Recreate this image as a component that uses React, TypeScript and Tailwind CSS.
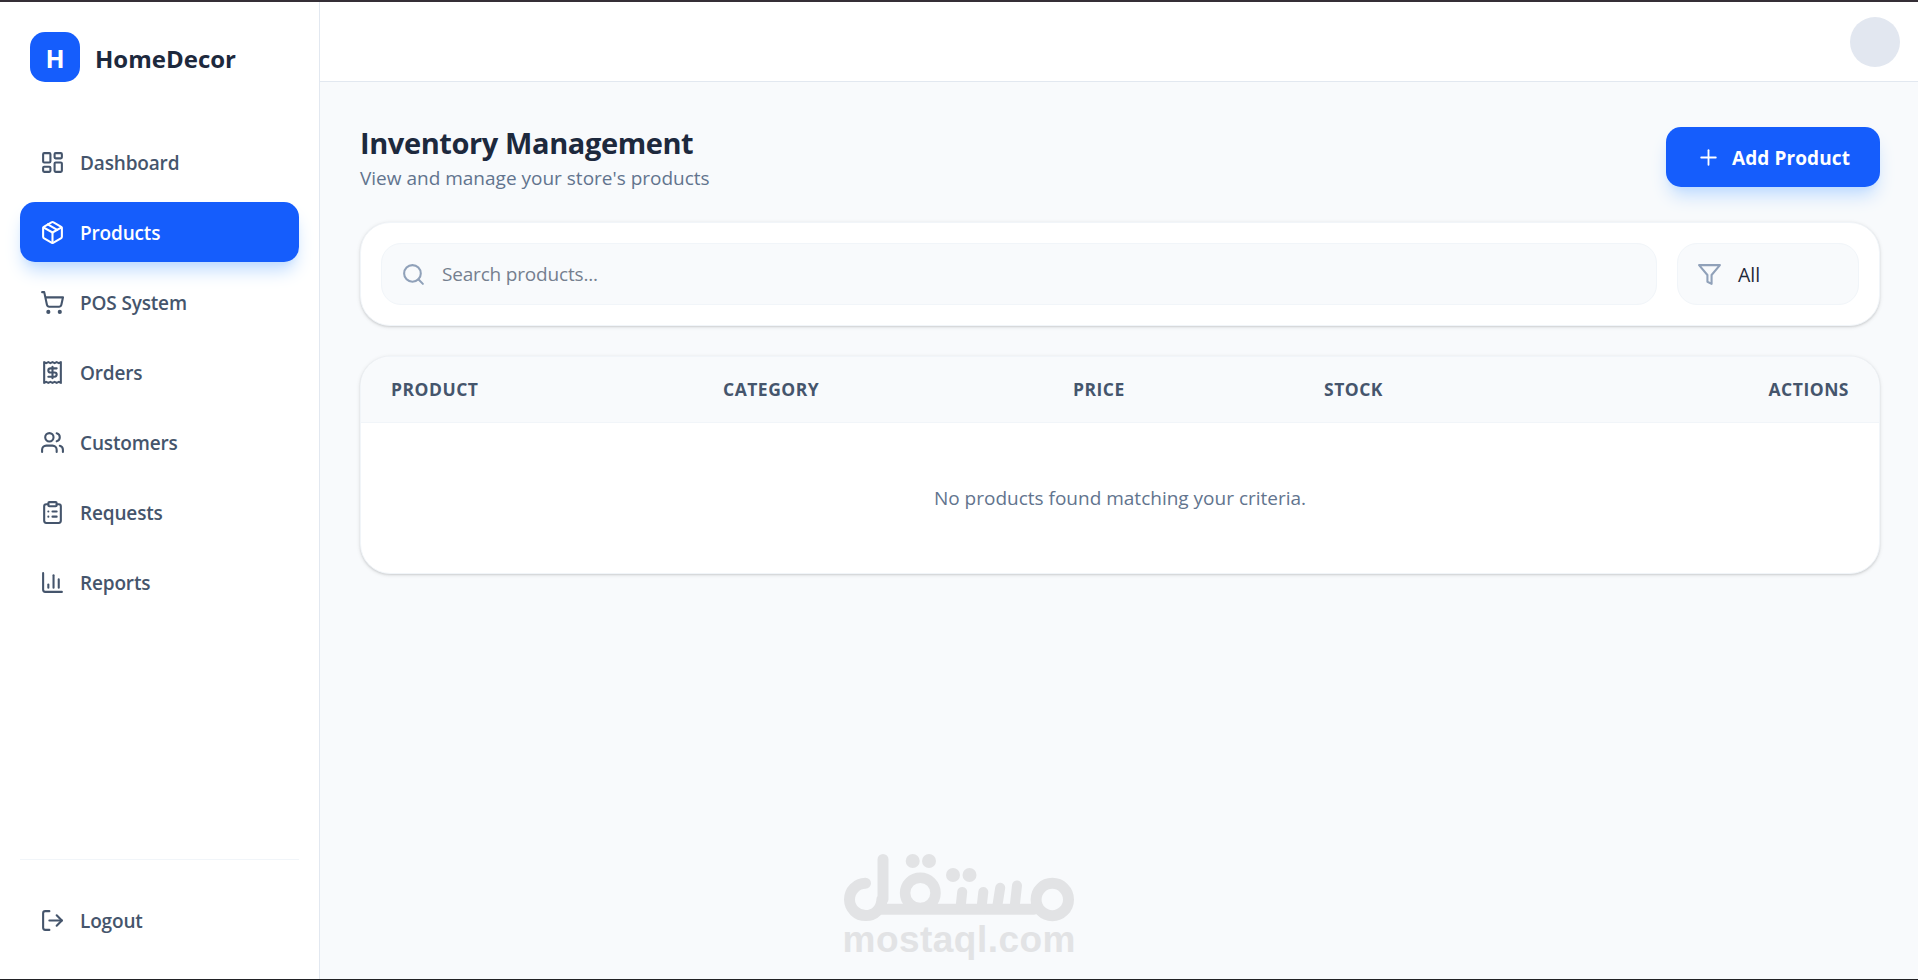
import {
  ChartColumn,
  ClipboardList,
  LayoutDashboard,
  LogOut,
  Package,
  Plus,
  Receipt,
  Search,
  ShoppingCart,
  Users,
  type LucideIcon,
} from "lucide-react";
import { FiFilter } from "react-icons/fi";
import React from "react";

const App = () => {
  return (
    <div className="h-[980px] flex flex-col overflow-hidden bg-slate-50 font-['Open_Sans','Noto_Sans',sans-serif] border-t-2 border-t-[#352f36] border-b border-b-[#202124]">
      <div className="flex flex-1 min-h-0">
        <Sidebar />
        <div className="flex-1 flex flex-col">
          <header className="h-20 bg-white border-b border-slate-200 flex items-center justify-end pr-[18px] shrink-0">
            <div className="w-[50px] h-[50px] mt-px rounded-full bg-[#e2e7f0]" />
          </header>
          <main className="flex-1 flex flex-col pl-10 pr-[38px] pt-[45px]">
            <div className="flex items-start justify-between">
              <div>
                <h1 className="-mt-0.5 mb-0.5 text-[29px] leading-[36px] tracking-[-0.4px] font-bold text-slate-800 whitespace-nowrap">
                  Inventory Management
                </h1>
                <p className="text-[19px] leading-[30px] text-slate-500 whitespace-nowrap">
                  View and manage your store's products
                </p>
              </div>
              <button className="w-[214px] h-[60px] rounded-[15px] bg-[#155dfc] text-white flex items-center pl-[30px] shadow-[0_12px_18px_-4px_#bedbff,0_5px_7px_-5px_#bedbff]">
                <Plus size={25} strokeWidth={1.75} />
                <span className="ml-[11px] pt-0.5 text-[19px] tracking-[0.1px] font-bold whitespace-nowrap">
                  Add Product
                </span>
              </button>
            </div>
            <div className="mt-[29px] h-[104px] rounded-[30px] bg-white border border-slate-100 shadow-[0_1px_4px_rgba(0,0,0,0.1),0_1px_2px_rgba(0,0,0,0.1)] p-5 flex gap-5">
              <div className="flex-1 h-[62px] rounded-[20px] bg-slate-50 border border-slate-100 flex items-center pl-[19px]">
                <Search size={25} className="text-slate-400" />
                <span className="ml-4 pt-px text-[19px] tracking-[-0.18px] text-[#757f8f]">
                  Search products...
                </span>
              </div>
              <div className="w-[182px] h-[62px] rounded-[20px] bg-slate-50 border border-slate-100 flex items-center pl-[19px]">
                <FiFilter size={25} className="text-slate-400" />
                <span className="ml-4 pt-px text-[19.5px] text-gray-800">
                  All
                </span>
              </div>
            </div>
            <ProductTable />
            <Watermark />
          </main>
        </div>
      </div>
    </div>
  );
};

const Sidebar = () => {
  return (
    <aside className="w-[320px] bg-white border-r border-slate-200 flex flex-col px-5 pt-[30px] shrink-0">
      <div className="flex items-center pl-2.5">
        <div className="w-[50px] h-[50px] rounded-[15px] bg-[#155dfc] text-white text-[25px] font-bold flex items-center justify-center pt-[3px]">
          H
        </div>
        <span className="ml-[15px] pt-[3px] text-[24px] font-bold text-slate-800">
          HomeDecor
        </span>
      </div>
      <nav className="mt-[50px] flex flex-col gap-2.5">
        <NavItem icon={LayoutDashboard} name="Dashboard" />
        <NavItem icon={Package} name="Products" active />
        <NavItem icon={ShoppingCart} name="POS System" />
        <NavItem icon={Receipt} name="Orders" />
        <NavItem icon={Users} name="Customers" />
        <NavItem icon={ClipboardList} name="Requests" />
        <NavItem icon={ChartColumn} name="Reports" />
      </nav>
      <div className="mt-auto h-[120px] border-t border-slate-100 pt-[30px]">
        <NavItem icon={LogOut} name="Logout" />
      </div>
    </aside>
  );
};

const NavItem = (props: {
  icon: LucideIcon;
  name: string;
  active?: boolean;
}) => {
  const Icon = props.icon;
  return (
    <div
      className={
        props.active
          ? "h-[60px] rounded-[15px] flex items-center pl-5 bg-[#155dfc] text-white shadow-[0_12px_18px_-4px_#bedbff,0_5px_7px_-5px_#bedbff]"
          : "h-[60px] rounded-[15px] flex items-center pl-5 text-slate-600"
      }
    >
      <Icon size={25} />
      <span className="ml-[15px] pt-0.5 text-[19px] font-semibold tracking-[-0.16px]">
        {props.name}
      </span>
    </div>
  );
};

const ProductTable = () => {
  return (
    <div className="mt-[30px] h-[218px] rounded-[30px] overflow-hidden bg-white border border-slate-100 shadow-[0_1px_4px_rgba(0,0,0,0.1),0_1px_2px_rgba(0,0,0,0.1)] shrink-0">
      <div className="h-[66px] bg-slate-50 border-b border-slate-100 flex items-center px-[30px] text-[17.5px] tracking-[0.5px] font-bold text-slate-600">
        <div className="w-[332px]">PRODUCT</div>
        <div className="w-[350px]">CATEGORY</div>
        <div className="w-[251px]">PRICE</div>
        <div>STOCK</div>
        <div className="ml-auto">ACTIONS</div>
      </div>
      <div className="h-[150px] flex items-center justify-center text-[19px] text-slate-500">
        No products found matching your criteria.
      </div>
    </div>
  );
};

const Watermark = () => {
  return (
    <svg
      width="280"
      height="149"
      viewBox="0 0 280 149"
      className="mt-[256px] ml-[460px] shrink-0"
      fill="none"
      stroke="#e2e3e5"
      strokeWidth="11"
      strokeLinecap="round"
      strokeLinejoin="round"
    >
      <path d="M45.5 53.2A16.2 16.2 0 1 0 61.9 69.3L63 69.3V29.5" />
      <path d="M62 79.2H214" />
      <circle cx="100.3" cy="62.9" r="15.2" strokeWidth="10.5" />
      <circle cx="232.3" cy="69.5" r="16.2" />
      <path
        d="M142.2 62L140.5 78M163.3 62L161.5 78M180.2 57.8L177 78M197 55.5L194.5 78"
        strokeWidth="10"
      />
      <g fill="#e2e3e5" stroke="none">
        <circle cx="92.7" cy="31" r="7" />
        <circle cx="109" cy="31" r="7" />
        <circle cx="133" cy="45" r="7" />
        <circle cx="149.5" cy="45" r="7" />
        <text
          x="22.5"
          y="121.5"
          textLength="233"
          className="font-['Liberation_Sans',sans-serif] text-[37px] font-bold"
        >
          mostaql.com
        </text>
      </g>
    </svg>
  );
};

export default App;
